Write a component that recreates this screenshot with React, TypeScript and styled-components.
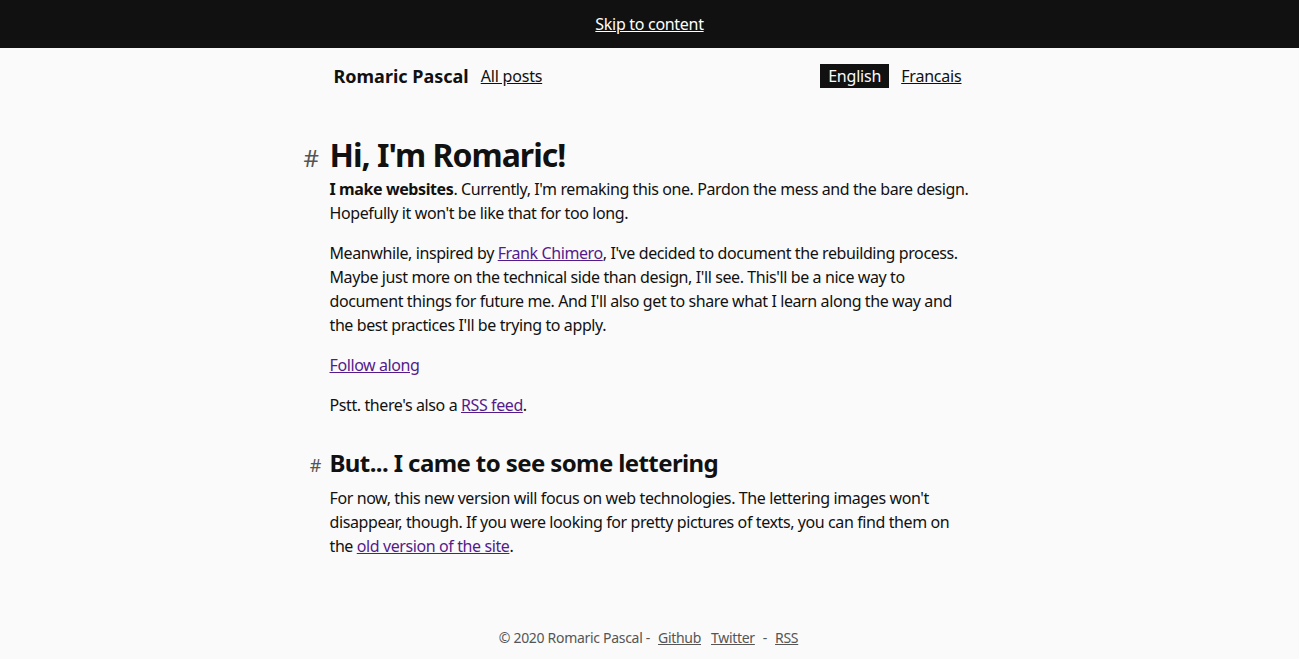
import React from "react";
import styled, { createGlobalStyle } from "styled-components";

const GlobalStyle = createGlobalStyle`
  html, body {
    margin: 0;
    padding: 0;
    background: #fafafa;
    color: #111;
    font-family: "Noto Sans", "Open Sans", sans-serif;
  }
  * { box-sizing: border-box; }
`;

const SkipBar = styled.div`
  height: 48px;
  background: #111;
  display: flex;
  align-items: center;
  justify-content: center;
`;

const SkipLink = styled.a`
  color: #fff;
  font-size: 16px;
  letter-spacing: -0.3px;
  text-decoration: underline;
`;

const Column = styled.div`
  width: 640px;
  margin: 0 auto;
`;

const Header = styled.header`
  display: flex;
  align-items: center;
  height: 56px;
  padding: 0 8px 0 4px;
  gap: 12px;
`;

const SiteName = styled.a`
  font-weight: 700;
  font-size: 18px;
  color: #111;
  text-decoration: none;
`;

const NavLink = styled.a<{ current?: boolean }>`
  font-size: 16px;
  letter-spacing: -0.2px;
  color: ${({ current }) => (current ? "#fafafa" : "#111")};
  background: ${({ current }) => (current ? "#111" : "transparent")};
  padding: ${({ current }) => (current ? "1px 8px" : "0")};
  text-decoration: ${({ current }) => (current ? "none" : "underline")};
`;

const Langs = styled.nav`
  margin-left: auto;
  display: flex;
  align-items: center;
  gap: 12px;
`;

const Main = styled.main`
  padding-top: 32px;
  min-height: 510px;
`;

const Heading = styled.h1<{ level: 1 | 2 }>`
  display: flex;
  align-items: baseline;
  margin: ${({ level }) => (level === 1 ? "0 0 3px" : "32px 0 8px")};
  margin-left: -26px;
  font-size: ${({ level }) => (level === 1 ? "32px" : "24px")};
  letter-spacing: ${({ level }) => (level === 1 ? "-1px" : "-0.6px")};
  line-height: 1.2;
  font-weight: 700;
`;

const Anchor = styled.a<{ level: 1 | 2 }>`
  width: 26px;
  flex: none;
  text-align: ${({ level }) => (level === 1 ? "left" : "right")};
  padding-right: ${({ level }) => (level === 1 ? "0" : "8px")};
  font-size: ${({ level }) => (level === 1 ? "24px" : "18px")};
  letter-spacing: 0;
  font-weight: 400;
  color: #555;
  text-decoration: none;
`;

const Para = styled.p`
  margin: 0 0 16px;
  font-size: 16px;
  line-height: 24px;
  letter-spacing: -0.4px;
`;

const Link = styled.a`
  color: #551a8b;
`;

const Footer = styled.footer`
  display: flex;
  justify-content: center;
  align-items: center;
  gap: 6px;
  height: 46px;
  font-size: 14px;
  letter-spacing: -0.3px;
  color: #555;
`;

const FootLink = styled.a`
  color: #555;
  margin: 0 2px;
`;

export default function App() {
  return (
    <>
      <GlobalStyle />
      <SkipBar>
        <SkipLink href="#content">Skip to content</SkipLink>
      </SkipBar>
      <Column>
        <Header>
          <SiteName href="#">Romaric Pascal</SiteName>
          <NavLink href="#">All posts</NavLink>
          <Langs>
            <NavLink current href="#">English</NavLink>
            <NavLink href="#">Francais</NavLink>
          </Langs>
        </Header>
        <Main id="content">
          <Heading level={1}>
            <Anchor level={1} href="#">#</Anchor>
            Hi, I'm Romaric!
          </Heading>
          <Para>
            <strong>I make websites</strong>. Currently, I'm remaking this one. Pardon the mess and
            the bare design. Hopefully it won't be like that for too long.
          </Para>
          <Para>
            Meanwhile, inspired by <Link href="#">Frank Chimero</Link>, I've decided to document the
            rebuilding process. Maybe just more on the technical side than design, I'll see.
            This'll be a nice way to document things for future me. And I'll also get to share what
            I learn along the way and the best practices I'll be trying to apply.
          </Para>
          <Para>
            <Link href="#">Follow along</Link>
          </Para>
          <Para>
            Pstt. there's also a <Link href="#">RSS feed</Link>.
          </Para>
          <Heading level={2} as="h2">
            <Anchor level={2} href="#">#</Anchor>
            But... I came to see some lettering
          </Heading>
          <Para>
            For now, this new version will focus on web technologies. The lettering images won't
            disappear, though. If you were looking for pretty pictures of texts, you can find them
            on the <Link href="#">old version of the site</Link>.
          </Para>
        </Main>
      </Column>
      <Footer>
        © 2020 Romaric Pascal -
        <FootLink href="#">Github</FootLink>
        <FootLink href="#">Twitter</FootLink>-
        <FootLink href="#">RSS</FootLink>
      </Footer>
    </>
  );
}
